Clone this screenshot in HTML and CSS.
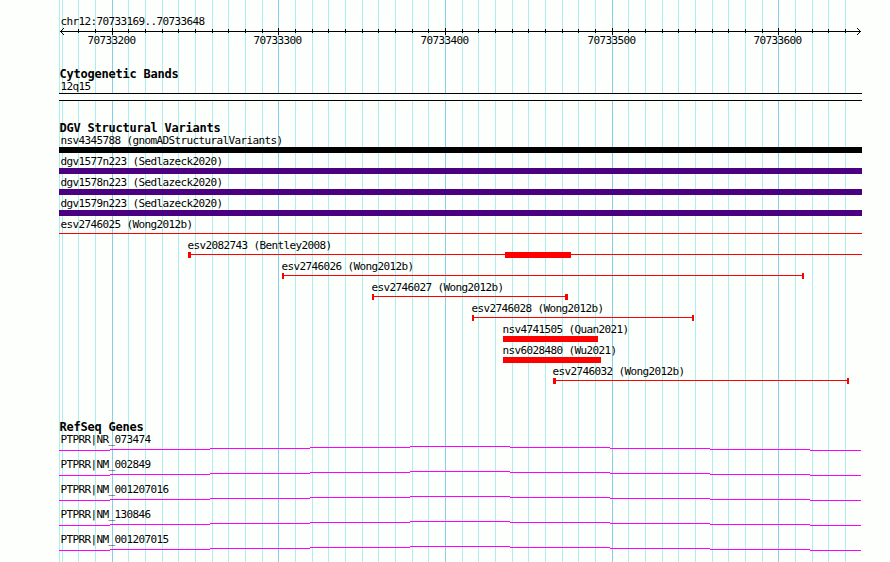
FILE: index.html
```
<!DOCTYPE html>
<html lang="en">
<head>
<meta charset="utf-8">
<title>chr12:70733169..70733648</title>
<link rel="stylesheet" href="styles.css">
<script src="tracks.js" defer></script>
</head>
<body>
<svg class="grid" width="890" height="562" aria-hidden="true"></svg>
<main class="panel">
  <section class="ruler">
    <div class="label">chr12:70733169..70733648</div>
    <svg class="axis" width="890" height="19" viewBox="0 28 890 19"></svg>
  </section>
  <section class="track">
    <h2>Cytogenetic Bands</h2>
    <div class="label">12q15</div>
    <div class="band"></div>
  </section>
  <section class="track variants">
    <h2>DGV Structural Variants</h2>
  </section>
  <section class="track genes">
    <h2>RefSeq Genes</h2>
  </section>
</main>
</body>
</html>
```

FILE: styles.css
```
html, body {
  margin: 0;
  background: #fdfffc;
}

body {
  position: relative;
  width: 890px;
  height: 562px;
  overflow: hidden;
  color: #000;
  font-family: "DejaVu Sans Mono", monospace;
}

svg {
  display: block;
  shape-rendering: crispEdges;
}

.grid {
  position: absolute;
  inset: 0;
}

.minor { fill: #afeeee; }
.major { fill: #87ceeb; }

.panel {
  position: relative;
  display: flex;
  flex-direction: column;
  gap: 20px;
  padding-top: 15px;
}

.label {
  height: 13px;
  padding-left: 60.5px;
  font-size: 11px;
  line-height: 13px;
  letter-spacing: -0.623px;
  white-space: pre;
}

.axis text {
  font-size: 11px;
  letter-spacing: -0.623px;
}

h2 {
  height: 13px;
  margin: 0;
  padding-left: 59.5px;
  font-size: 12px;
  font-weight: bold;
  line-height: 14px;
  letter-spacing: -0.225px;
  white-space: pre;
}

.band {
  box-sizing: border-box;
  width: 803px;
  height: 8px;
  margin-left: 59px;
  border: solid #000;
  border-width: 1px 0;
  background: #fdfffc;
}

.variant { height: 21px; }
.gene { height: 25px; }

.genes { margin-top: 14px; }

.black { fill: #000; }
.indigo { fill: #4b0082; }
.red { fill: #f00; }
.intron { fill: #f0f; }
```

FILE: tracks.js
```
// Each rect is [x, y, width, height].
function rects(list, cls) {
  return list.map(function (r) {
    return '<rect class="' + cls + '" x="' + r[0] + '" y="' + r[1] +
      '" width="' + r[2] + '" height="' + r[3] + '"/>';
  }).join('');
}

// Grid lines and axis ticks: one per 10 bases, major at every 100.
var grid = rects([[59, 0, 1, 562]], 'minor');
var axis = rects([[60, 31, 801, 1]], 'black');
for (var k = 0; k < 48; k++) {
  var x = Math.round(61.67 + k * 50 / 3);
  var major = k % 10 === 3;
  grid += rects([[x, 0, 1, 562]], major ? 'major' : 'minor');
  if (k > 0) axis += rects([major ? [x, 28, 1, 7] : [x, 29, 1, 4]], 'black');
}
// Arrow heads, stepped one pixel at a time from the tip.
for (var i = 0; i < 4; i++) {
  axis += rects([[60 + i, 31 - i, 1, 1], [60 + i, 31 + i, 1, 1],
    [860 - i, 31 - i, 1, 1], [860 - i, 31 + i, 1, 1]], 'black');
}
[[87.5, 200], [253.5, 300], [420.5, 400], [587.5, 500], [753.5, 600]].forEach(function (t) {
  axis += '<text x="' + t[0] + '" y="44">70733' + t[1] + '</text>';
});
document.querySelector('.grid').innerHTML = grid;
document.querySelector('.axis').innerHTML = axis;

function row(cls, name, left, height, shapes) {
  return '<div class="' + cls + '"><div class="label" style="padding-left:' + left +
    'px">' + name + '</div><svg width="890" height="' + height + '">' + shapes + '</svg></div>';
}

var full = [[59, 0, 803, 6]];
var variants = [
  ['nsv4345788 (gnomADStructuralVariants)', 60.5, 'black', full],
  ['dgv1577n223 (Sedlazeck2020)', 60.5, 'indigo', full],
  ['dgv1578n223 (Sedlazeck2020)', 60.5, 'indigo', full],
  ['dgv1579n223 (Sedlazeck2020)', 60.5, 'indigo', full],
  ['esv2746025 (Wong2012b)', 60.5, 'red', [[59, 2, 803, 1]]],
  ['esv2082743 (Bentley2008)', 187.5, 'red', [[188, 0, 3, 6], [188, 2, 674, 1], [505, 0, 66, 6]]],
  ['esv2746026 (Wong2012b)', 281.5, 'red', [[282, 0, 2, 6], [282, 2, 521, 1], [802, 0, 2, 6]]],
  ['esv2746027 (Wong2012b)', 371.5, 'red', [[372, 0, 2, 6], [372, 2, 195, 1], [565, 0, 3, 6]]],
  ['esv2746028 (Wong2012b)', 471.5, 'red', [[472, 0, 2, 6], [472, 2, 221, 1], [692, 0, 2, 6]]],
  ['nsv4741505 (Quan2021)', 502.5, 'red', [[503, 0, 95, 6]]],
  ['nsv6028480 (Wu2021)', 502.5, 'red', [[503, 0, 98, 6]]],
  ['esv2746032 (Wong2012b)', 552.5, 'red', [[553, 0, 3, 6], [553, 2, 295, 1], [847, 0, 2, 6]]]
];
document.querySelector('.variants').insertAdjacentHTML('beforeend', variants.map(function (v) {
  return row('variant', v[0], v[1], 6, rects(v[3], v[2]));
}).join(''));

var intron = [
  [59, 4, 51, 1], [110, 3, 100, 1], [210, 2, 100, 1], [310, 1, 100, 1], [410, 0, 100, 1],
  [510, 1, 100, 1], [610, 2, 100, 1], [710, 3, 100, 1], [810, 4, 51, 1]
];
document.querySelector('.genes').insertAdjacentHTML('beforeend',
  ['NR_073474', 'NM_002849', 'NM_001207016', 'NM_130846', 'NM_001207015'].map(function (g) {
    return row('gene', 'PTPRR|' + g, 60.5, 5, rects(intron, 'intron'));
  }).join(''));
```
